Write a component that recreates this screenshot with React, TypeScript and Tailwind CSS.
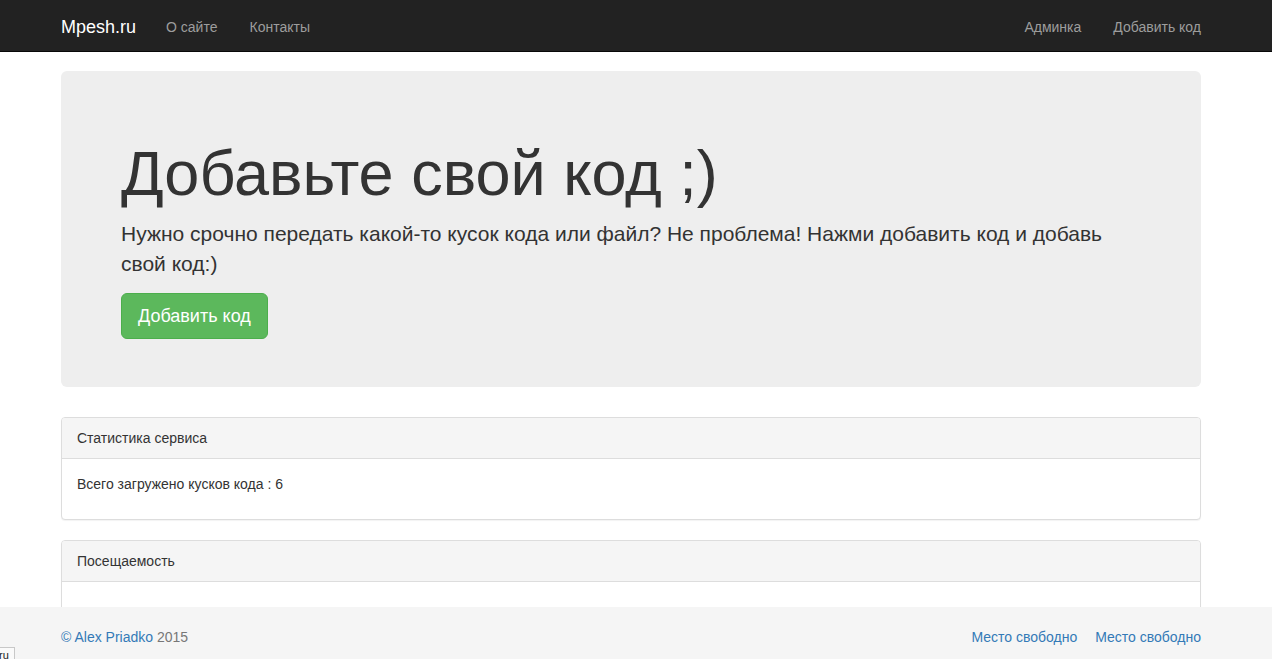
import React from 'react';

const navLink = 'block px-[15px] pt-[16px] pb-[14px] text-[14px] leading-[20px] text-[#9d9d9d] hover:text-white';

function Navbar() {
  return (
    <nav className="h-[52px] border-b border-[#080808] bg-[#222]">
      <div className="ml-[61px] flex h-[51px] w-[1140px] items-center justify-between">
        <div className="flex items-center">
          <a href="#" className="block pt-[16px] pb-[14px] pr-[15px] text-[18px] leading-[20px] text-white">
            Mpesh.ru
          </a>
          <a href="#" className={navLink}>О сайте</a>
          <a href="#" className={`${navLink} pl-[17px]`}>Контакты</a>
        </div>
        <div className="-mr-[15px] flex items-center">
          <a href="#" className={`${navLink} pr-[17px]`}>Админка</a>
          <a href="#" className={navLink}>Добавить код</a>
        </div>
      </div>
    </nav>
  );
}

function Panel({ title, children }: { title: string; children?: React.ReactNode }) {
  return (
    <div className="mb-[20px] rounded-[4px] border border-[#ddd] bg-white shadow-[0_1px_1px_rgba(0,0,0,0.05)]">
      <div className="rounded-t-[3px] border-b border-[#ddd] bg-[#f5f5f5] px-[15px] py-[10px]">{title}</div>
      <div className="p-[15px]">{children}</div>
    </div>
  );
}

export default function App() {
  return (
    <div className="min-h-screen bg-white font-['Liberation_Sans',Arial,Helvetica,sans-serif] text-[14px] leading-[20px] text-[#333]">
      <Navbar />

      <main className="ml-[61px] w-[1140px] pt-[19px] pb-[80px]">
        <div className="mb-[30px] rounded-[6px] bg-[#eee] px-[60px] pt-[48px] pb-[48px]">
          <h1 className="mt-[20px] mb-[11px] text-[63px] leading-[1.1] font-normal">Добавьте свой код ;)</h1>
          <p className="mb-[15px] text-[21px] leading-[1.4]">
            Нужно срочно передать какой-то кусок кода или файл? Не проблема! Нажми добавить код и добавь свой код:)
          </p>
          <a
            href="#"
            className="inline-block rounded-[6px] border border-[#4cae4c] bg-[#5cb85c] px-[16px] py-[10px] text-[18px] leading-[24px] text-white hover:bg-[#449d44]"
          >
            Добавить код
          </a>
        </div>

        <Panel title="Статистика сервиса">
          <p className="mb-[10px]">Всего загружено кусков кода : 6</p>
        </Panel>

        <Panel title="Посещаемость">
          <div className="h-[60px]" />
        </Panel>
      </main>

      <footer className="fixed inset-x-0 bottom-0 h-[52px] bg-[#f5f5f5]">
        <div className="ml-[61px] flex w-[1140px] items-center justify-between pt-[20px]">
          <p>
            <a href="#" className="text-[#337ab7]">© Alex Priadko</a>{' '}
            <span className="text-[#777]">2015</span>
          </p>
          <div className="flex gap-[18px]">
            <a href="#" className="text-[#337ab7]">Место свободно</a>
            <a href="#" className="text-[#337ab7]">Место свободно</a>
          </div>
        </div>
      </footer>

      {/* counter badge tucked into the corner */}
      <div className="fixed bottom-0 left-0 h-[12px] w-[15px] overflow-hidden border-t border-r border-[#c8c8c8] bg-[#fafafa]">
        <span className="absolute top-[1px] -left-[1px] text-[11px] leading-[12px] text-[#222]">ru</span>
      </div>
    </div>
  );
}
